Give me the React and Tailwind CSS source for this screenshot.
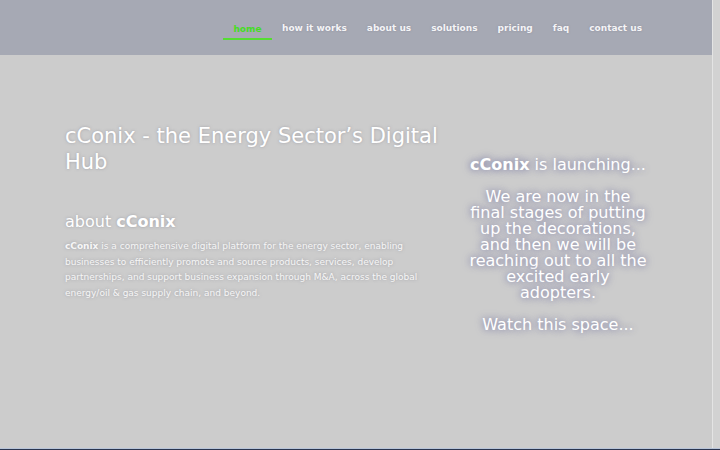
import React from "react";

const font = { fontFamily: '"DejaVu Sans", sans-serif' };

export default function App() {
  const nav = ["how it works", "about us", "solutions", "pricing", "faq", "contact us"];
  return (
    <div className="w-[720px] h-[450px] bg-[#cccccc] flex flex-col overflow-hidden" style={font}>
      <div className="flex flex-1">
        <div className="w-[712px] flex flex-col">
          <header className="h-[55px] bg-[#a6a9b4] flex items-center pl-[223px]">
            <nav className="flex items-center">
              <div className="flex flex-col items-center w-[49px] mr-[10px] pt-[6px]">
                <span className="text-[9px] font-bold text-[#44dd22] leading-[14px]">home</span>
                <span className="mt-[2px] h-[2px] w-full bg-[#55dd33]" />
              </div>
              {nav.map((n) => (
                <span
                  key={n}
                  className="text-[9px] font-bold text-[#f4f4f6] mr-[20px] leading-[14px] [text-shadow:0_0_2px_rgba(120,120,140,0.6)]"
                >
                  {n}
                </span>
              ))}
            </nav>
          </header>
          <main className="flex flex-1 pl-[65px] pt-[68px]">
            <section className="w-[380px] text-white [text-shadow:0_0_3px_rgba(140,140,150,0.7)]">
              <h1 className="text-[21px] leading-[26px] font-normal">
                cConix - the Energy Sector’s Digital Hub
              </h1>
              <h2 className="mt-[36px] text-[16px] leading-[22px]">
                about <b>cConix</b>
              </h2>
              <p className="mt-[6px] text-[9px] leading-[15.5px] text-[#f6f6f6] w-[370px]">
                <b>cConix</b> is a comprehensive digital platform for the energy sector, enabling
                businesses to efficiently promote and source products, services, develop
                partnerships, and support business expansion through M&amp;A, across the global
                energy/oil &amp; gas supply chain, and beyond.
              </p>
            </section>
            <section className="ml-[21px] w-[184px] pt-[32px] text-center text-white [text-shadow:0_0_6px_#8a8aa8,0_0_10px_#9a9ab8]">
              <p className="text-[16px] leading-[20px]">
                <b>cConix</b> is launching...
              </p>
              <p className="mt-[14px] text-[16px] leading-[16px]">
                We are now in the final stages of putting up the decorations, and then we will be
                reaching out to all the excited early adopters.
              </p>
              <p className="mt-[14px] text-[16px] leading-[20px]">Watch this space...</p>
            </section>
          </main>
        </div>
        <div className="w-[8px] bg-[#d2d2d2] border-l border-[#e4e4e4]" />
      </div>
      <div className="h-[1px] bg-[#b8c4d8]" />
      <div className="h-[1px] bg-[#2a3550]" />
    </div>
  );
}
